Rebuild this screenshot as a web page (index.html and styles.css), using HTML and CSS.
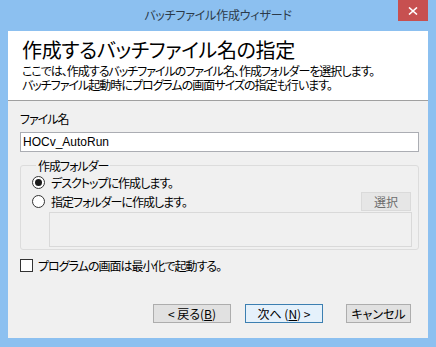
FILE: index.html
```html
<!DOCTYPE html>
<html lang="ja">
<head>
  <meta charset="UTF-8">
  <title>バッチファイル作成ウィザード</title>
  <link rel="stylesheet" href="styles.css">
</head>
<body>
  <div class="window">
    <div class="titlebar">
      <span class="title">バッチファイル作成ウィザード</span>
      <button type="button" class="close" aria-label="閉じる">
        <svg width="10" height="8" viewBox="0 0 10 8">
          <path d="M1 0.5 L9 7.5 M9 0.5 L1 7.5" stroke="#fff" stroke-width="1.6" fill="none"/>
        </svg>
      </button>
    </div>

    <div class="client">
      <div class="header">
        <h1>作成するバッチファイル名の指定</h1>
        <p>ここでは、作成するバッチファイルのファイル名、作成フォルダーを選択します。<br>バッチファイル起動時にプログラムの画面サイズの指定も行います。</p>
      </div>

      <div class="body">
        <label class="field-label" for="fileName">ファイル名</label>
        <input type="text" id="fileName" class="textbox" value="HOCv_AutoRun">

        <fieldset class="group">
          <legend>作成フォルダー</legend>
          <div class="radio-row">
            <span class="radio checked"></span>
            <span>デスクトップに作成します。</span>
          </div>
          <div class="radio-row">
            <span class="radio"></span>
            <span>指定フォルダーに作成します。</span>
            <button type="button" class="flat-button">選択</button>
          </div>
          <div class="path-box"></div>
        </fieldset>

        <div class="check-row">
          <span class="checkbox"></span>
          <span>プログラムの画面は最小化で起動する。</span>
        </div>

        <div class="button-group">
          <button type="button" class="button">&lt; 戻る(<u>B</u>)</button>
          <button type="button" class="button default">次へ (<u>N</u>) &gt;</button>
          <button type="button" class="button cancel">キャンセル</button>
        </div>
      </div>
    </div>
  </div>
</body>
</html>
```

FILE: styles.css
```css
body {
  margin: 0;
  font-family: "Noto Sans CJK JP", "Liberation Sans", sans-serif;
  font-size: 12px;
  font-feature-settings: "palt";
  letter-spacing: -1px;
  color: #000;
}

button, input {
  font-feature-settings: "palt";
  letter-spacing: 0;
}

.window {
  width: 436px;
  height: 347px;
  background-color: #8cc0f0;
  display: flex;
  flex-direction: column;
}

.titlebar {
  position: relative;
  height: 31px;
  display: flex;
  justify-content: center;
  align-items: center;
}

.title {
  font-size: 12px;
  letter-spacing: -0.2px;
  color: #2b3a4a;
  margin-top: -2px;
}

.close {
  position: absolute;
  top: 0;
  right: 8px;
  width: 30px;
  height: 21px;
  background-color: #c75050;
  border: none;
  padding: 0;
  display: flex;
  justify-content: center;
  align-items: center;
}

.client {
  flex: 1;
  margin: 0 8px 9px 8px;
  background-color: #f0f0f0;
  display: flex;
  flex-direction: column;
}

.header {
  background-color: #fff;
  height: 70px;
  border-bottom: 1px solid #a0a0a0;
  padding: 0 14px;
  box-sizing: border-box;
}

.header h1 {
  font-size: 20px;
  font-weight: normal;
  margin: 5px 0 0 0;
  line-height: 28px;
  letter-spacing: -0.3px;
}

.header p {
  margin: 0;
  line-height: 14px;
  font-size: 12px;
}

.body {
  padding: 10px 9px 0 12px;
  display: flex;
  flex-direction: column;
}

.field-label {
  line-height: 16px;
}

.textbox {
  margin-top: 5px;
  height: 20px;
  box-sizing: border-box;
  border: 1px solid #abadb3;
  background: #fff;
  font-family: "Liberation Sans", sans-serif;
  font-size: 12px;
  padding: 0 2px;
  outline: none;
}

.group {
  margin: 6px 0 0 0;
  padding: 0 6px 4px 11px;
  border: 1px solid #dcdcdc;
  border-radius: 3px;
  height: 92px;
  box-sizing: border-box;
}

.group legend {
  padding: 0 2px;
  margin-left: 4px;
  line-height: 15px;
}

.radio-row {
  display: flex;
  align-items: center;
  gap: 6px;
  height: 19px;
}

.radio {
  width: 11px;
  height: 11px;
  border: 1px solid #333;
  border-radius: 50%;
  background: #fff;
  display: flex;
  justify-content: center;
  align-items: center;
}

.radio.checked::after {
  content: "";
  width: 7px;
  height: 7px;
  border-radius: 50%;
  background: #1a1a1a;
}

.flat-button {
  margin-left: auto;
  margin-right: 1px;
  width: 50px;
  height: 19px;
  background: #e6e6e6;
  border: 1px solid #dadada;
  font-family: inherit;
  font-size: 12px;
  color: #6d6d6d;
  padding: 0;
}

.path-box {
  margin: 1px 0 0 17px;
  height: 35px;
  border: 1px solid #d9d9d9;
  background: #f0f0f0;
  box-sizing: border-box;
}

.check-row {
  margin-top: 8px;
  display: flex;
  align-items: center;
  gap: 5px;
  height: 14px;
}

.checkbox {
  width: 11px;
  height: 11px;
  border: 1px solid #333;
  background: #fff;
}

.button-group {
  margin-top: 32px;
  padding-right: 8px;
  display: flex;
  justify-content: flex-end;
}

.button {
  width: 78px;
  height: 19px;
  padding: 0;
  background: #e1e1e1;
  border: 1px solid #adadad;
  font-family: inherit;
  font-size: 12px;
  color: #000;
  line-height: 15px;
}

.button.default {
  margin-left: 14px;
  border-color: #3c7fb1;
  background: #e5f1fb;
}

.button.cancel {
  width: 65px;
  margin-left: 23px;
}
```
